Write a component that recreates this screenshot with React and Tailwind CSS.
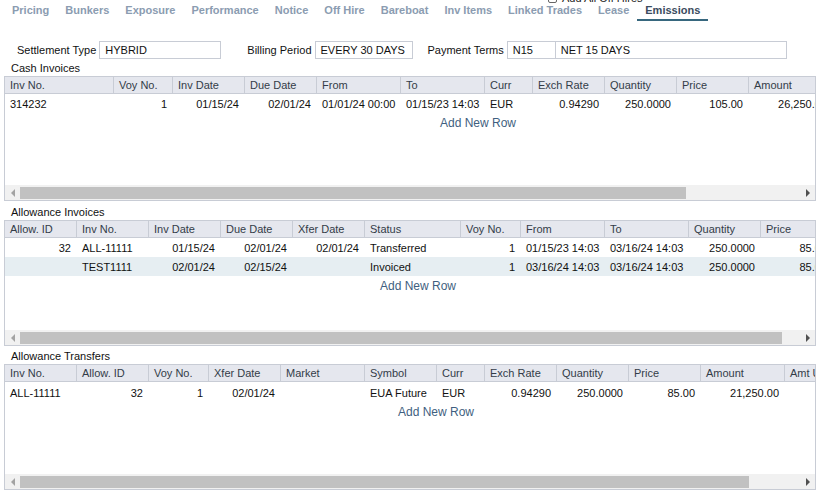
import React from 'react'

const tabs = ['Pricing', 'Bunkers', 'Exposure', 'Performance', 'Notice', 'Off Hire', 'Bareboat', 'Inv Items', 'Linked Trades', 'Lease', 'Emissions']

const cashCols = [
  { t: 'Inv No.', w: 109, a: 'l' },
  { t: 'Voy No.', w: 59, a: 'r' },
  { t: 'Inv Date', w: 72, a: 'r' },
  { t: 'Due Date', w: 72, a: 'r' },
  { t: 'From', w: 84, a: 'l' },
  { t: 'To', w: 84, a: 'l' },
  { t: 'Curr', w: 48, a: 'l' },
  { t: 'Exch Rate', w: 72, a: 'r' },
  { t: 'Quantity', w: 72, a: 'r' },
  { t: 'Price', w: 72, a: 'r' },
  { t: 'Amount', w: 84, a: 'r' }
]
const cashRows = [
  ['314232', '1', '01/15/24', '02/01/24', '01/01/24 00:00', '01/15/23 14:03', 'EUR', '0.94290', '250.0000', '105.00', '26,250.00']
]

const allowCols = [
  { t: 'Allow. ID', w: 72, a: 'r' },
  { t: 'Inv No.', w: 72, a: 'l' },
  { t: 'Inv Date', w: 72, a: 'r' },
  { t: 'Due Date', w: 72, a: 'r' },
  { t: 'Xfer Date', w: 72, a: 'r' },
  { t: 'Status', w: 96, a: 'l' },
  { t: 'Voy No.', w: 60, a: 'r' },
  { t: 'From', w: 84, a: 'l' },
  { t: 'To', w: 84, a: 'l' },
  { t: 'Quantity', w: 72, a: 'r' },
  { t: 'Price', w: 72, a: 'r' }
]
const allowRows = [
  ['32', 'ALL-11111', '01/15/24', '02/01/24', '02/01/24', 'Transferred', '1', '01/15/23 14:03', '03/16/24 14:03', '250.0000', '85.00'],
  ['', 'TEST1111', '02/01/24', '02/15/24', '', 'Invoiced', '1', '03/16/24 14:03', '03/16/24 14:03', '250.0000', '85.00']
]

const xferCols = [
  { t: 'Inv No.', w: 72, a: 'l' },
  { t: 'Allow. ID', w: 72, a: 'r' },
  { t: 'Voy No.', w: 60, a: 'r' },
  { t: 'Xfer Date', w: 72, a: 'r' },
  { t: 'Market', w: 84, a: 'l' },
  { t: 'Symbol', w: 72, a: 'l' },
  { t: 'Curr', w: 48, a: 'l' },
  { t: 'Exch Rate', w: 72, a: 'r' },
  { t: 'Quantity', w: 72, a: 'r' },
  { t: 'Price', w: 72, a: 'r' },
  { t: 'Amount', w: 84, a: 'r' },
  { t: 'Amt USD', w: 90, a: 'r' }
]
const xferRows = [
  ['ALL-11111', '32', '1', '02/01/24', '', 'EUA Future', 'EUR', '0.94290', '250.0000', '85.00', '21,250.00', '22,537.47']
]

const GridTable = ({ cols, rows, addPad, thumb, height, lead }) => {
  return (
    <div className={`ml-[4px] w-[812px] ${height} border border-[#c8ccd5] flex flex-col overflow-hidden bg-white`}>
      <div className="flex h-[17px] shrink-0 bg-[#e5e7ee] border-b border-[#c8ccd5]">
        {cols.map((c, i) => (
          <div key={i} style={{ width: c.w }} className="shrink-0 border-r border-[#c8ccd5] pl-[5px] text-[11px] leading-[16px] text-[#333c48] whitespace-nowrap overflow-hidden">
            {c.t}
          </div>
        ))}
      </div>
      {rows.map((r, ri) => (
        <div key={ri} className={`flex h-[19px] shrink-0 overflow-hidden ${ri % 2 === 1 ? 'bg-[#e6eef2]' : 'bg-white'}`}>
          {cols.map((c, i) => (
            <div key={i} style={{ width: c.w }} className={`shrink-0 px-[5px] pr-[6px] text-[11px] ${lead} text-[#111] whitespace-nowrap overflow-hidden ${c.a === 'r' ? 'text-right' : 'text-left'}`}>
              {r[i]}
            </div>
          ))}
        </div>
      ))}
      <div className="h-[19px] shrink-0 flex overflow-hidden">
        <div style={{ paddingLeft: addPad }} className={`text-[12px] ${lead} text-[#3f5f80] whitespace-nowrap`}>Add New Row</div>
      </div>
      <div className="flex-1" />
      <div className="h-[15px] shrink-0 bg-[#f1f1f1] flex items-center">
        <div className="w-[15px] h-full flex items-center justify-center">
          <div className="w-0 h-0 border-y-[4px] border-y-transparent border-r-[4px] border-r-[#a3a3a3]" />
        </div>
        <div style={{ width: thumb }} className="h-[12px] bg-[#c1c1c1]" />
        <div className="flex-1" />
        <div className="w-[15px] h-full flex items-center justify-center">
          <div className="w-0 h-0 border-y-[4px] border-y-transparent border-l-[4px] border-l-[#505050]" />
        </div>
      </div>
    </div>
  )
}

const Field = ({ value, w }) => (
  <div className={`${w} h-[18px] border border-[#c8ccd5] bg-white pl-[5px] text-[11px] leading-[16px] text-[#111] whitespace-nowrap overflow-hidden`}>
    {value}
  </div>
)

export default function App() {
  return (
    <div className="relative w-[818px] h-[503px] bg-white overflow-hidden" style={{ fontFamily: '"Liberation Sans", Arial, sans-serif' }}>
      {/* clipped option above the tab strip */}
      <div className="absolute top-[-10px] left-[548px] flex items-center gap-[5px] text-[11px] text-[#222]">
        <div className="w-[9px] h-[9px] border border-[#666] rounded-[2px] bg-white" />
        <span>Add All Off Hires</span>
      </div>

      {/* Tabs */}
      <div className="flex h-[22px] pl-[4px]">
        {tabs.map((t) => (
          <div key={t} className={`px-2 pt-[3px] text-[11px] font-bold leading-[14px] whitespace-nowrap ${t === 'Emissions' ? 'text-[#3b4c5e] border-b-[2px] border-[#37677e] h-[21px]' : 'text-[#8b9cb1]'}`}>
            {t}
          </div>
        ))}
      </div>

      {/* Settlement fields */}
      <div className="flex items-center mt-[19px] h-[18px] text-[11px] text-[#111]">
        <span className="ml-[17px] mr-[3px] whitespace-nowrap">Settlement Type</span>
        <Field value="HYBRID" w="w-[122px]" />
        <span className="ml-[26px] mr-[3px] whitespace-nowrap">Billing Period</span>
        <Field value="EVERY 30 DAYS" w="w-[98px]" />
        <span className="ml-[15px] mr-[3px] whitespace-nowrap">Payment Terms</span>
        <Field value="N15" w="w-[49px]" />
        <Field value="NET 15 DAYS" w="w-[231px] border-l-0" />
      </div>

      <div className="h-[17px] pt-[3px] pl-[11px] text-[11px] leading-[13px] text-[#111]">Cash Invoices</div>
      <GridTable cols={cashCols} rows={cashRows} addPad={435} thumb={666} height="h-[125px]" lead="leading-[21px]" />

      <div className="h-[19px] pt-[5px] pl-[11px] text-[11px] leading-[13px] text-[#111]">Allowance Invoices</div>
      <GridTable cols={allowCols} rows={allowRows} addPad={375} thumb={762} height="h-[126px]" lead="leading-[20px]" />

      <div className="h-[18px] pt-[4px] pl-[11px] text-[11px] leading-[13px] text-[#111]">Allowance Transfers</div>
      <GridTable cols={xferCols} rows={xferRows} addPad={393} thumb={729} height="h-[126px]" lead="leading-[23px]" />
    </div>
  )
}
